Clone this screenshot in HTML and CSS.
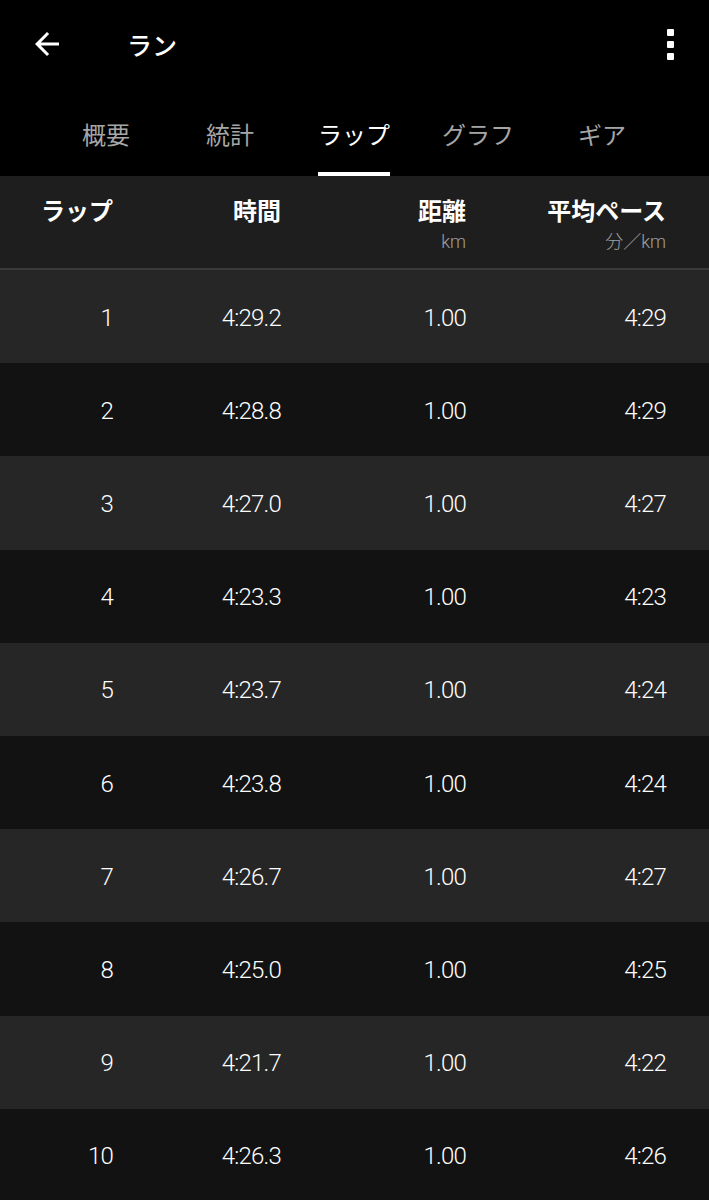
FILE: index.html
```html
<!DOCTYPE html>
<html lang="ja">
<head>
<meta charset="utf-8">
<link rel="stylesheet" href="styles.css">
</head>
<body>
<div class="app">
  <header class="topbar">
    <div class="back">
      <svg viewBox="0 0 24 24" width="36" height="36"><path fill="#fff" d="M20 11H7.83l5.59-5.59L12 4l-8 8 8 8 1.41-1.41L7.83 13H20v-2z"/></svg>
    </div>
    <div class="title">ラン</div>
    <div class="kebab"><span></span><span></span><span></span></div>
  </header>
  <nav class="tabs">
    <div class="tab">概要</div>
    <div class="tab">統計</div>
    <div class="tab active">ラップ</div>
    <div class="tab">グラフ</div>
    <div class="tab">ギア</div>
  </nav>
  <div class="thead">
    <div class="th"><div class="h">ラップ</div></div>
    <div class="th"><div class="h">時間</div></div>
    <div class="th"><div class="h">距離</div><div class="sub">km</div></div>
    <div class="th"><div class="h">平均ペース</div><div class="sub">分／km</div></div>
  </div>
  <div class="rows">
    <div class="row"><div>1</div><div>4:29.2</div><div>1.00</div><div>4:29</div></div>
    <div class="row"><div>2</div><div>4:28.8</div><div>1.00</div><div>4:29</div></div>
    <div class="row"><div>3</div><div>4:27.0</div><div>1.00</div><div>4:27</div></div>
    <div class="row"><div>4</div><div>4:23.3</div><div>1.00</div><div>4:23</div></div>
    <div class="row"><div>5</div><div>4:23.7</div><div>1.00</div><div>4:24</div></div>
    <div class="row"><div>6</div><div>4:23.8</div><div>1.00</div><div>4:24</div></div>
    <div class="row"><div>7</div><div>4:26.7</div><div>1.00</div><div>4:27</div></div>
    <div class="row"><div>8</div><div>4:25.0</div><div>1.00</div><div>4:25</div></div>
    <div class="row"><div>9</div><div>4:21.7</div><div>1.00</div><div>4:22</div></div>
    <div class="row"><div>10</div><div>4:26.3</div><div>1.00</div><div>4:26</div></div>
  </div>
</div>
</body>
</html>
```
FILE: styles.css
```css
html, body {
  margin: 0;
  padding: 0;
  background: #000;
}
.app {
  width: 709px;
  height: 1200px;
  overflow: hidden;
  background: #000;
  color: #fff;
  font-family: Roboto, "Noto Sans CJK JP", sans-serif;
}
.topbar {
  height: 90px;
  display: flex;
  align-items: center;
}
.back {
  width: 36px;
  height: 36px;
  margin-left: 29px;
  margin-top: -2px;
}
.back svg { display: block; }
.title {
  margin-left: 62px;
  font-family: "Noto Sans CJK JP", sans-serif;
  font-size: 25px;
  font-weight: 500;
  margin-top: -2px;
}
.kebab {
  margin-left: auto;
  margin-right: 35px;
  display: flex;
  flex-direction: column;
  gap: 5px;
  margin-top: -2px;
}
.kebab span {
  width: 7px;
  height: 7px;
  background: #fff;
  border-radius: 1px;
}
.tabs {
  height: 86px;
  display: grid;
  grid-template-columns: repeat(5, 124px);
  padding-left: 44px;
}
.tab {
  display: flex;
  align-items: center;
  justify-content: center;
  font-family: "Noto Sans CJK JP", sans-serif;
  font-size: 24px;
  color: #a6a6a6;
  position: relative;
}
.tab.active {
  color: #fff;
}
.tab.active::after {
  content: "";
  position: absolute;
  bottom: 0;
  left: 26px;
  width: 72px;
  height: 4px;
  background: #fff;
}
.thead, .row {
  display: grid;
  grid-template-columns: 113px 168px 185px 200px;
}
.thead {
  background: #1e1e1e;
  border-bottom: 2px solid #3a3a3a;
  box-sizing: border-box;
  height: 94px;
}
.th {
  text-align: right;
  padding-top: 18px;
}
.th .h {
  font-family: "Noto Sans CJK JP", sans-serif;
  font-weight: 700;
  font-size: 24px;
  line-height: 32px;
}
.th .sub {
  font-family: Roboto, "Noto Sans CJK JP", sans-serif;
  font-size: 18px;
  font-weight: 300;
  color: #a0a0a0;
  line-height: 24px;
  margin-top: 4px;
}
.row {
  height: 93.2px;
  align-items: center;
  font-size: 24px;
  font-weight: 300;
  letter-spacing: -0.8px;
  background: #121212;
}
.row:nth-child(odd) {
  background: #262626;
}
.row > div {
  text-align: right;
  padding-top: 2px;
}
```
